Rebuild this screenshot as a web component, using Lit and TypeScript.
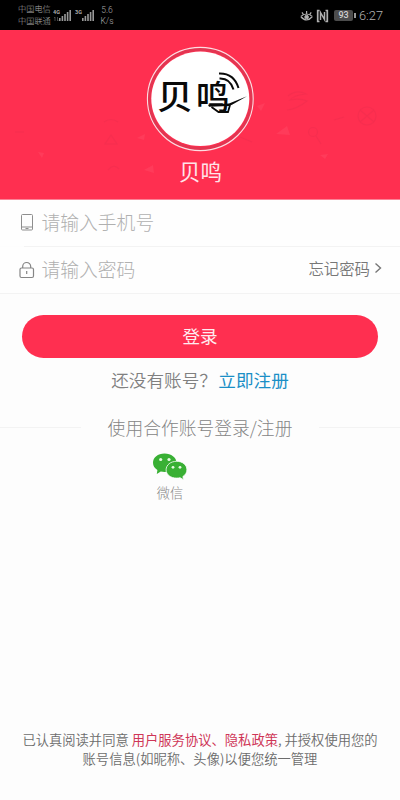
import { LitElement, html, css, svg } from "lit";
import { customElement } from "lit/decorators.js";

const bars = (x: number) => svg`
  ${[3, 5, 7, 9, 11].map((h, i) => svg`<rect x=${x + i * 2.6} y=${20 - h} width="1.6" height=${h} fill="#999" />`)}
`;

@customElement("status-bar")
class StatusBar extends LitElement {
  static styles = css`
    :host { display: flex; height: 30px; background: #000; color: #a9a9a9;
      font-family: Roboto, "Noto Sans CJK SC", sans-serif; align-items: center; box-sizing: border-box; padding: 1px 17px 0 18px; }
    .carriers { font-size: 8.2px; line-height: 11.5px; width: 35px; white-space: nowrap; }
    .signals { width: 43px; height: 30px; flex: none; }
    .net { font: 5.5px Roboto, sans-serif; font-weight: 700; fill: #aaa; }
    .speed { font-size: 8.6px; line-height: 11px; margin-left: 3px; width: 16px; text-align: center; }
    .right { margin-left: auto; display: flex; align-items: center; }
    .marks { width: 29px; height: 16px; margin-right: 5px; }
    .battery { width: 19px; height: 11px; background: #4c4c4c; border-radius: 2px; color: #d0d0d0; font-size: 9px;
      line-height: 11.5px; text-align: center; font-weight: 500; }
    .tip { width: 1.5px; height: 5px; background: #999; margin: 0 3.5px 0 1px; }
    .time { font-size: 12.8px; line-height: 16px; letter-spacing: 0; color: #b2b2b2; }
  `;
  render() {
    return html`
      <div class="carriers">中国电信<br />中国联通</div>
      <svg class="signals" viewBox="0 0 43 30">
        <text class="net" x="0" y="13">4G</text>
        <path d="M2 16v4M1 17l1-1M4.500 16v4M5.500 19l-1 1" stroke="#555" stroke-width=".8" fill="none" />
        ${bars(6)}
        <text class="net" x="22" y="13">3G</text>
        ${bars(29)}
      </svg>
      <div class="speed">5.6<br />K/s</div>
      <div class="right">
        <svg class="marks" viewBox="0 0 29 16" fill="none" stroke="#b0b0b0">
          <path d="M.8 8.500Q6.500 3.500 12.400 8.500M.8 8.500Q6.500 15.500 12.400 8.500M6.600 5.500V3M3.300 6.300 2 4.300M9.900 6.300l1.300-2" stroke-width="1.200" />
          <circle cx="6.600" cy="9" r="1.800" fill="#b0b0b0" />
          <path d="M19.500 2.500h-1.800v11h1.800M25.500 2.500h1.800v11h-1.800" stroke-width="1.700" />
          <path d="M20.500 12V4.500l4 7V4" stroke-width="1.500" />
        </svg>
        <div class="battery">93</div>
        <div class="tip"></div>
        <div class="time">6:27</div>
      </div>
    `;
  }
}

@customElement("brand-header")
class BrandHeader extends LitElement {
  static styles = css`
    :host { display: block; height: 170px; background: #ff2f50; border-bottom: 1px solid #fb8296; box-sizing: border-box; overflow: hidden; }
    .art { display: block; width: 400px; height: 169px; }
    text { font-family: "Noto Sans CJK SC", sans-serif; }
    .mark { font-size: 36px; font-weight: 500; fill: #0a0a0a; }
    .name { font-size: 21.500px; fill: #ffe4e9; font-weight: 400; }
  `;
  render() {
    return html`
      <svg class="art" viewBox="0 30 400 169" fill="none">
        <g stroke="#e62c4d" stroke-width="1.200" opacity=".32">
          <path d="M288 96q9-7 18-2-12 1-16 6 10-2 17 1-10 8-20 9" />
          <circle cx="367" cy="116" r="9" /><path d="M360 110l14 12M374 110l-14 12" />
          <circle cx="313" cy="132" r="4.500" /><path d="M316 136l5 8M334 120l10-3M240 137l12 5" />
          <path d="M104 122q7-5 14 0M105 144h12l-6-9zM108 170q6-7 11-1M15 132h9" />
        </g>
        <g fill="#ff6078" opacity=".25">
          <path d="M276 134l11-8 3 9zM257 106l8-3-4 8zM137 138l8-4-1 6zM320 155l8-1-3 5zM144 170l9-5 1 8zM38 152l6 1-2 5z" />
        </g>
        <ellipse cx="200.300" cy="99" rx="51.500" ry="50" stroke="#e33551" stroke-width="4" />
        <ellipse cx="200.300" cy="99" rx="52.900" ry="51.600" stroke="#ffdce2" stroke-width="1.100" />
        <ellipse cx="200.300" cy="98.800" rx="49" ry="47.200" fill="#fff" />
        <text class="mark" transform="translate(157 109.300) scale(1 .95)">贝</text>
        <text class="mark" transform="translate(196 109.300) scale(.93 .93)">鸣</text>
        <g stroke="#0a0a0a" stroke-width="2">
          <path d="M219 73.500Q234 73 238.500 88M219.500 78.500Q230 78 233.500 89.500" />
        </g>
        <path d="M208 104.800l21-1.300 18-7.200-15 8.400-3 1.300-20 .8z" fill="#0a0a0a" />
        <path d="M211.500 107l7 5h9.500l2-7" stroke="#0a0a0a" stroke-width="1.800" />
        <text class="name" x="200.500" y="179.500" text-anchor="middle">贝鸣</text>
      </svg>
    `;
  }
}

@customElement("app-root")
class AppRoot extends LitElement {
  static styles = css`
    :host { display: flex; flex-direction: column; width: 400px; height: 800px; background: #fdfdfd; overflow: hidden;
      color: #888; font-family: "Noto Sans CJK SC", sans-serif; font-weight: 300; }
    .row { height: 46px; display: flex; align-items: center; padding: 0 18px 4px 19px; flex: none; font-size: 18.800px; color: #b0b0b0;
      box-sizing: border-box; background: #fefefe; }
    .icon { width: 16px; height: 20px; margin-right: 6.500px; flex: none; position: relative; top: 1px; }
    .line { height: 1px; background: #f3f3f3; flex: none; }
    .inset { margin-left: 24px; }
    .forgot { margin-left: auto; display: flex; align-items: center; font-size: 15.400px; color: #777; gap: 4px; font-weight: 350; }
    .login { margin: 21px 22px 0; height: 43px; border: 0; border-radius: 22px; background: #ff2f50; color: #ffecef; flex: none;
      font: 400 17.600px/41px "Noto Sans CJK SC", sans-serif; padding: 0 0 2px; }
    .signup { margin-top: 9px; line-height: 26px; font-size: 17.600px; text-align: center; flex: none; color: #808080; font-weight: 350; }
    .signup a { color: #1b8fc6; margin-left: 1.500px; font-weight: 400; }
    .partner { display: flex; align-items: center; margin-top: 21px; height: 26px; font-size: 17.800px; flex: none; white-space: nowrap; color: #858585; gap: 27px; }
    .partner i { flex: 1; height: 1px; background: #f3f3f3; }
    .wechat { display: flex; flex-direction: column; align-items: center; width: 60px; margin: 12px 0 0 140px; font-size: 13.200px; line-height: 20px; }
    .wechat svg { width: 36px; height: 28px; margin-bottom: 3px; }
    .terms { margin-top: auto; padding-bottom: 32px; font-size: 13.300px; line-height: 19px; text-align: center; white-space: nowrap; color: #6c6c6c; font-weight: 350; }
    .terms b { color: #cf3657; font-weight: 400; }
  `;
  render() {
    return html`
      <status-bar></status-bar>
      <brand-header></brand-header>
      <div class="row">
        <svg class="icon" viewBox="0 0 16 20" fill="none" stroke="#8e8e8e">
          <rect x="2.500" y="2.500" width="11" height="15.500" rx="1" /><path d="M2.500 15h11M6.500 16.500h3" />
        </svg>
        <span>请输入手机号</span>
      </div>
      <div class="line inset"></div>
      <div class="row">
        <svg class="icon" viewBox="0 0 16 20" fill="none" stroke="#858585" stroke-width="1.200">
          <rect x="1" y="9" width="13.500" height="9.500" rx="1.500" /><path d="M3.700 9V7.500a4 4 0 0 1 8 0V9M7.700 12v3" />
        </svg>
        <span>请输入密码</span>
        <span class="forgot">忘记密码
          <svg width="8" height="12" viewBox="0 0 8 12" fill="none" stroke="#777" stroke-width="1.400"><path d="M1.500 1.500 6.500 6l-5 4.500" /></svg>
        </span>
      </div>
      <div class="line"></div>
      <button class="login">登录</button>
      <div class="signup">还没有账号？<a>立即注册</a></div>
      <div class="partner"><i></i><span>使用合作账号登录/注册</span><i></i></div>
      <div class="wechat">
        <svg viewBox="0 0 36 28">
          <path d="M12.500 1.500C5.800 1.500 1 5.500 1 10.800c0 3 1.700 5.600 4.400 7.300L4.800 22l4-2.400c1.200.3 2.500.5 3.700.5 6.700 0 12-4 12-9.300s-5.300-9.300-12-9.300z" fill="#39b034" />
          <path d="M24.700 9.300c-6 0-10.600 3.600-10.600 8.500s4.600 8.300 10.600 8.300c1.200 0 2.300-.1 3.400-.4l3.400 2-.6-3.200c2.500-1.500 4-3.900 4-6.700 0-4.900-4.400-8.500-10.200-8.500z" fill="#39b034" stroke="#fdfdfd" stroke-width=".8" />
          <g fill="#e6fae2"><circle cx="8.700" cy="7.500" r="1.600" /><circle cx="17" cy="7.500" r="1.600" /><circle cx="21" cy="15.300" r="1.400" /><circle cx="28" cy="15.300" r="1.400" /></g>
        </svg>
        <span>微信</span>
      </div>
      <div class="terms">已认真阅读并同意 <b>用户服务协议、隐私政策</b>, 并授权使用您的<br />账号信息(如昵称、头像)以便您统一管理</div>
    `;
  }
}
